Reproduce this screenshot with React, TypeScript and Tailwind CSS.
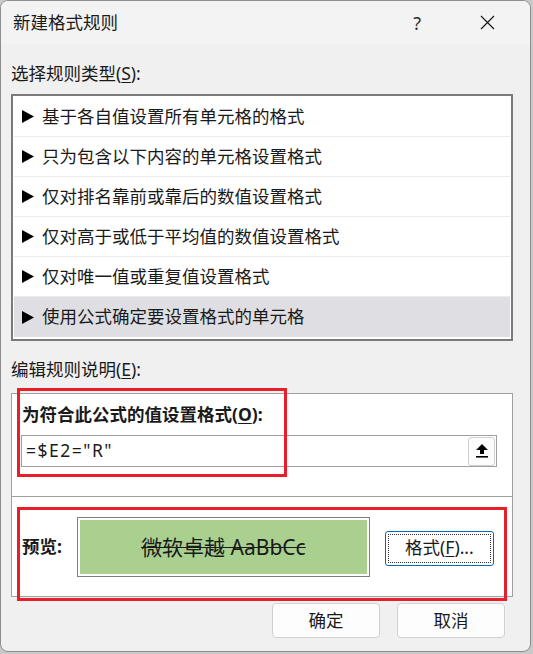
const ruleTypes = [
  "基于各自值设置所有单元格的格式",
  "只为包含以下内容的单元格设置格式",
  "仅对排名靠前或靠后的数值设置格式",
  "仅对高于或低于平均值的数值设置格式",
  "仅对唯一值或重复值设置格式",
  "使用公式确定要设置格式的单元格",
] as const;

const FONT = "font-['Noto_Sans','Noto_Sans_CJK_SC',sans-serif]";

function Triangle() {
  return (
    <svg className="h-[13px] w-[12px] shrink-0" viewBox="0 0 12 13" aria-hidden>
      <polygon points="0,0 12,6.5 0,13" fill="#000" />
    </svg>
  );
}

function CloseIcon() {
  return (
    <svg className="h-[15px] w-[15px]" viewBox="0 0 15 15" fill="none" aria-hidden>
      <path d="M1 1 14 14M14 1 1 14" stroke="#1a1a1a" strokeWidth="1.2" />
    </svg>
  );
}

function UploadIcon() {
  return (
    <svg className="h-[14px] w-[12px]" viewBox="0 0 12 14" aria-hidden>
      <polygon points="6,0 12,6 8,6 8,10 4,10 4,6 0,6" fill="#000" />
      <rect x="0" y="12" width="12" height="1.6" fill="#000" />
    </svg>
  );
}

export default function App() {
  return (
    <div className={`relative h-[654px] w-[533px] bg-[#c9c9c9] ${FONT} text-[#1a1a1a]`}>
      <div className="flex h-[652px] w-[531px] flex-col overflow-hidden rounded-[8px] border border-[#8e8e8e] bg-[#f0f0f0]">
        {/* title bar */}
        <div className="flex h-[43px] shrink-0 items-center bg-[#f3f3f3] pl-[12px]">
          <span className="text-[17.5px] leading-none">新建格式规则</span>
          <span className="ml-auto mr-[59px] text-[18px] leading-none text-[#333]">?</span>
          <span className="mr-[35px]">
            <CloseIcon />
          </span>
        </div>

        <div className="flex flex-1 flex-col px-[10px]">
          <div className="flex h-[50px] items-center pt-[9px] text-[17.5px] leading-none">
            选择规则类型(<span className="underline underline-offset-2">S</span>):
          </div>

          <div className="w-[502px] border-2 border-[#7a7a7a] bg-white p-[1px] pb-[2px]">
            {ruleTypes.map((t, i) => (
              <div
                key={t}
                className={`flex h-[40px] items-center gap-[8px] pl-[8px] ${
                  i === ruleTypes.length - 1 ? "bg-[#dfdfe3]" : "border-b border-[#ebebeb]"
                }`}
              >
                <Triangle />
                <span className="text-[17.5px] leading-none">{t}</span>
              </div>
            ))}
          </div>

          <div className="flex h-[52px] items-center pt-[6px] text-[17.5px] leading-none">
            编辑规则说明(<span className="underline underline-offset-2">E</span>):
          </div>

          <div className="flex w-[502px] flex-col border border-[#a0a0a0] bg-white">
            <div className="flex h-[103px] flex-col border-b border-[#a0a0a0] pl-[9px] pr-[15px]">
              <div className="flex h-[41px] items-center pl-[1px] text-[17.5px] font-bold leading-none">
                为符合此公式的值设置格式(<span className="underline underline-offset-2">O</span>):
              </div>
              <div className="flex h-[32px] items-center border border-[#a0a0a0] pl-[4px] pr-[1px]">
                <span className="text-[17.5px] leading-none tracking-[1.5px]">=$E2="R"</span>
                <button className="ml-auto flex h-[29px] w-[27px] items-center justify-center rounded-[3px] border border-[#d0d0d0] bg-[#fcfcfc]">
                  <UploadIcon />
                </button>
              </div>
            </div>

            <div className="flex h-[99px] items-center pl-[10px]">
              <span className="text-[17.5px] font-bold leading-none">预览:</span>
              <div className="ml-[15px] mt-[1px] flex h-[60px] w-[293px] items-center justify-center border border-[#7f7f7f] bg-white p-[2px]">
                <div className="flex h-full w-full items-center justify-center bg-[#a9d08e]">
                  <span className="text-[21px] leading-none text-[#1a1a1a] line-through decoration-1">
                    微软卓越 AaBbCc
                  </span>
                </div>
              </div>
              <button className="ml-[15px] mt-[3px] flex h-[35px] w-[109px] items-center justify-center rounded-[3px] border border-[#0067c0] bg-white p-[2px]">
                <span className="flex h-full w-full items-center justify-center border border-dotted border-[#333] text-[17.5px] leading-none">
                  格式(<span className="underline underline-offset-2">F</span>)...
                </span>
              </button>
            </div>
          </div>

          <div className="mt-[6px] flex justify-end gap-[17px] pr-[15px]">
            <button className="flex h-[35px] w-[108px] items-center justify-center rounded-[4px] border border-[#d0d0d0] bg-[#fdfdfd] text-[17.5px] leading-none">
              确定
            </button>
            <button className="flex h-[35px] w-[108px] items-center justify-center rounded-[4px] border border-[#d0d0d0] bg-[#fdfdfd] text-[17.5px] leading-none">
              取消
            </button>
          </div>
        </div>
      </div>

      {/* annotation boxes */}
      <div className="absolute left-[17px] top-[388px] h-[89px] w-[270px] border-[3px] border-[#e81e2a]" />
      <div className="absolute left-[17px] top-[507px] h-[94px] w-[490px] border-[3px] border-[#e81e2a]" />
    </div>
  );
}
